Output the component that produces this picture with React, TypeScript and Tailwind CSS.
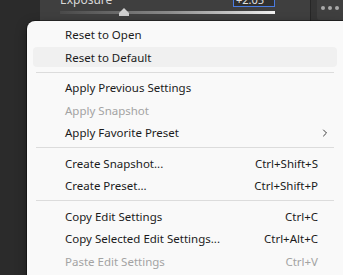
import { ChevronRight } from 'lucide-react';

type Item = { label: string; shortcut?: string; disabled?: boolean; active?: boolean; sub?: boolean } | 'sep';

const items: Item[] = [
  { label: 'Reset to Open' },
  { label: 'Reset to Default', active: true },
  'sep',
  { label: 'Apply Previous Settings' },
  { label: 'Apply Snapshot', disabled: true },
  { label: 'Apply Favorite Preset', sub: true },
  'sep',
  { label: 'Create Snapshot...', shortcut: 'Ctrl+Shift+S' },
  { label: 'Create Preset...', shortcut: 'Ctrl+Shift+P' },
  'sep',
  { label: 'Copy Edit Settings', shortcut: 'Ctrl+C' },
  { label: 'Copy Selected Edit Settings...', shortcut: 'Ctrl+Alt+C' },
  { label: 'Paste Edit Settings', shortcut: 'Ctrl+V', disabled: true },
];

export default function App() {
  return (
    <div className="relative w-[343px] h-[275px] overflow-hidden bg-[#2b2b2b] flex font-['Noto_Sans',sans-serif]">
      <div className="w-[40px] shrink-0" />
      {/* develop panel behind the menu */}
      <div className="w-[270px] shrink-0 bg-[#3f3f3f] relative">
        <div className="absolute left-[20px] top-[-9px] text-[12px] text-[#d8d8d8]">Exposure</div>
        <div className="absolute left-[193px] top-[-8px] w-[42px] h-[15px] border border-[#4a7be0] bg-[#303030] text-[11px] leading-[13px] text-[#e0e0e0] pl-[2px]">+2.05</div>
        <div className="absolute left-[20px] top-[11px] w-[215px] h-[3px] bg-gradient-to-r from-[#4a4a4a] via-[#8a8a8a] to-[#f2f2f2]" />
        <svg className="absolute left-[78px] top-[7px]" width="12" height="10" viewBox="0 0 12 10">
          <path d="M6 1 L11 6 V9 H1 V6 Z" fill="#d0d0d0" />
        </svg>
      </div>
      <div className="w-px shrink-0 bg-[#262626]" />
      <div className="flex-1 bg-[#353535] pl-[6px]">
        <div className="h-[20px] bg-[#3f3f3f] rounded-bl-[3px] flex items-center justify-center gap-[3px] pb-[5px]">
          <span className="w-[4px] h-[4px] rounded-full bg-[#a9a9a9]" />
          <span className="w-[4px] h-[4px] rounded-full bg-[#a9a9a9]" />
          <span className="w-[4px] h-[4px] rounded-full bg-[#a9a9a9]" />
        </div>
      </div>

      {/* context menu */}
      <div className="absolute left-[27px] top-[21px] w-[316px] bg-[#f9f9f9] rounded-tl-[8px] pt-[2px] px-[6px] pb-[6px] shadow-[0_0_0_1px_rgba(0,0,0,0.35),0_4px_12px_rgba(0,0,0,0.4)] text-[11.5px]">
        {items.map((it, i) =>
          it === 'sep' ? (
            <div key={i} className="h-[8px] flex items-center px-[3px]">
              <div className="h-px w-full bg-[#dcdcdc]" />
            </div>
          ) : (
            <div key={i} className="h-[22.5px] py-[1px]">
              <div
                className={`h-full flex items-center pl-[32px] pr-[19px] pt-[1px] rounded-[4px] ${it.active ? 'bg-[#f0f0f0]' : ''} ${it.disabled ? 'text-[#a3a3a3]' : 'text-[#1b1b1b]'}`}
              >
                <span className="flex-1">{it.label}</span>
                {it.shortcut && <span>{it.shortcut}</span>}
                {it.sub && <ChevronRight size={12} strokeWidth={1.75} className="mr-[-13px] text-[#222]" />}
              </div>
            </div>
          ),
        )}
      </div>
    </div>
  );
}
